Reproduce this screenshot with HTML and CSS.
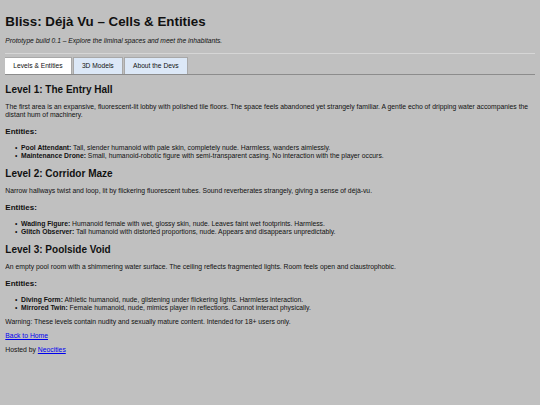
FILE: index.html
```html
<!DOCTYPE html>
<html lang="en">
<head>
<meta charset="utf-8">
<title>Bliss: Déjà Vu – Cells &amp; Entities</title>
<link rel="stylesheet" href="styles.css">
</head>
<body>
<header class="site-header">
  <h1 class="title">Bliss: Déjà Vu – Cells &amp; Entities</h1>
  <p class="tagline">Prototype build 0.1 – Explore the liminal spaces and meet the inhabitants.</p>
</header>
<nav class="tabs">
  <a class="tab tab-active">Levels &amp; Entities</a>
  <a class="tab">3D Models</a>
  <a class="tab">About the Devs</a>
</nav>
<main class="content">
  <section class="level">
    <h2 class="level-title">Level 1: The Entry Hall</h2>
    <p class="text">The first area is an expansive, fluorescent-lit lobby with polished tile floors. The space feels abandoned yet strangely familiar. A gentle echo of dripping water accompanies the distant hum of machinery.</p>
    <h3 class="sub-title">Entities:</h3>
    <ul class="entities">
      <li class="entity"><strong>Pool Attendant:</strong> Tall, slender humanoid with pale skin, completely nude. Harmless, wanders aimlessly.</li>
      <li class="entity"><strong>Maintenance Drone:</strong> Small, humanoid-robotic figure with semi-transparent casing. No interaction with the player occurs.</li>
    </ul>
  </section>
  <section class="level">
    <h2 class="level-title">Level 2: Corridor Maze</h2>
    <p class="text">Narrow hallways twist and loop, lit by flickering fluorescent tubes. Sound reverberates strangely, giving a sense of déjà-vu.</p>
    <h3 class="sub-title">Entities:</h3>
    <ul class="entities">
      <li class="entity"><strong>Wading Figure:</strong> Humanoid female with wet, glossy skin, nude. Leaves faint wet footprints. Harmless.</li>
      <li class="entity"><strong>Glitch Observer:</strong> Tall humanoid with distorted proportions, nude. Appears and disappears unpredictably.</li>
    </ul>
  </section>
  <section class="level">
    <h2 class="level-title">Level 3: Poolside Void</h2>
    <p class="text">An empty pool room with a shimmering water surface. The ceiling reflects fragmented lights. Room feels open and claustrophobic.</p>
    <h3 class="sub-title">Entities:</h3>
    <ul class="entities">
      <li class="entity"><strong>Diving Form:</strong> Athletic humanoid, nude, glistening under flickering lights. Harmless interaction.</li>
      <li class="entity"><strong>Mirrored Twin:</strong> Female humanoid, nude, mimics player in reflections. Cannot interact physically.</li>
    </ul>
  </section>
  <p class="text">Warning: These levels contain nudity and sexually mature content. Intended for 18+ users only.</p>
  <p class="text"><a class="link" href="#">Back to Home</a></p>
  <p class="text">Hosted by <a class="link" href="#">Neocities</a></p>
</main>
</body>
</html>
```

FILE: styles.css
```css
html {
  background: #c0c0c0;
}
body {
  margin: 5.33px;
  font-family: "Liberation Sans", Arial, sans-serif;
  font-size: 6.8px;
  line-height: 8.2px;
  color: #111;
  background: #c0c0c0;
}
.site-header {
  border-bottom: 1px solid #d6d6d6;
}
.title {
  font-size: 13.33px;
  line-height: 15.4px;
  font-weight: bold;
  margin: 8.47px 0 8.2px;
}
.tagline {
  font-size: 6.67px;
  font-style: italic;
  margin: 0 0 7px;
}
.tabs {
  display: flex;
  gap: 1.33px;
  margin-top: 3.4px;
  border-bottom: 1px solid #8c8c8c;
}
.tab {
  display: block;
  font-size: 6.67px;
  line-height: 7.67px;
  padding: 4px 8px;
  border: 1px solid #a8a8a8;
  border-bottom: none;
  background: #dce8f7;
  color: #111;
}
.tab:first-child {
  margin-left: -1px;
}
.tab-active {
  background: #fff;
}
.content {
  padding-top: 1.45px;
}
.level-title {
  font-size: 10px;
  line-height: 11.5px;
  font-weight: bold;
  margin: 7.8px 0;
}
.sub-title {
  font-size: 8px;
  line-height: 9.2px;
  font-weight: bold;
  margin: 7.5px 0;
}
.text {
  margin: 6px 0;
}
.entities {
  margin: 6px 0;
  padding-left: 15.7px;
  list-style: none;
}
.entity::before {
  content: "•";
  display: inline-block;
  width: 6px;
  margin-left: -6px;
}
.link {
  color: #0000ee;
  text-decoration: underline;
}
```
